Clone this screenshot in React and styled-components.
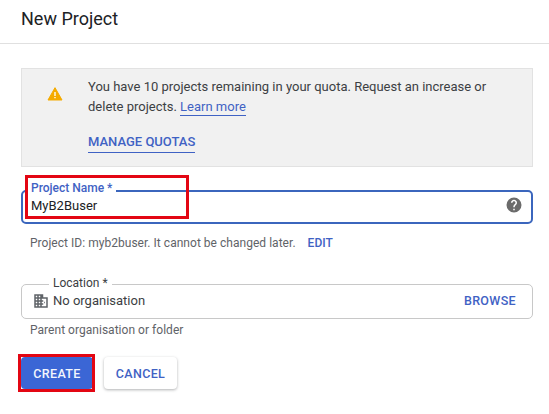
import React from "react";
import styled, { createGlobalStyle } from "styled-components";

const Global = createGlobalStyle`
  html, body { margin: 0; padding: 0; background: #fff; }
  body { width: 549px; height: 414px; overflow: hidden; font-family: Roboto, "Liberation Sans", sans-serif; }
`;

const Page = styled.div`
  width: 549px;
  height: 414px;
  overflow: hidden;
  display: flex;
  flex-direction: column;
`;

const Header = styled.header`
  height: 43px;
  box-sizing: content-box;
  border-bottom: 1px solid #e0e0e0;
  padding-left: 21px;
  display: flex;
  align-items: center;
`;

const Title = styled.h1`
  margin: 0 0 6px;
  font-size: 18px;
  font-weight: 400;
  line-height: 24px;
  color: #202124;
`;

const Body = styled.main`
  width: 512px;
  margin-left: 21px;
  padding-top: 24px;
  display: flex;
  flex-direction: column;
`;

const Notice = styled.section`
  height: 99px;
  box-sizing: border-box;
  background: #f1f1f1;
  border: 1px solid #e2e2e2;
  display: flex;
  padding: 8px 0 0 25px;
  gap: 25px;
`;

const WarnIcon = styled.svg`
  width: 16px;
  height: 16px;
  flex: none;
  margin-top: 9px;
`;

const NoticeText = styled.div`
  font-size: 13px;
  line-height: 20px;
  color: #3c4043;
  width: 410px;
`;

const NoticeLine = styled.div`
  white-space: nowrap;
`;

const Underlined = styled.a`
  color: #3f62c4;
  text-decoration: none;
  border-bottom: 1px solid #3f62c4;
  padding-bottom: 1px;
`;

const Quotas = styled(Underlined)`
  display: inline-block;
  margin-top: 16px;
  font-weight: 500;
  line-height: 18px;
`;

const Field = styled.div`
  position: relative;
  box-sizing: border-box;
  height: ${p => p.$h}px;
  margin-top: ${p => p.$top}px;
  border: ${p => (p.$active ? "2px solid #3b66bd" : "1px solid #c8c8c8")};
  border-radius: 5px;
  display: flex;
  align-items: center;
  padding: ${p => p.$pad};
`;

const Legend = styled.span`
  position: absolute;
  left: ${p => p.$left}px;
  top: ${p => p.$top}px;
  background: #fff;
  padding: 0 4px;
  font-size: 12px;
  line-height: 14px;
  color: ${p => p.$color};
  font-weight: ${p => p.$weight};
`;

const FieldValue = styled.span`
  flex: 1;
  font-size: 13px;
  color: ${p => p.$color};
`;

const Hint = styled.p`
  margin: ${p => p.$margin};
  font-size: 12px;
  line-height: 16px;
  letter-spacing: 0.03px;
  color: #5f6368;
`;

const Edit = styled.a`
  margin-left: 12px;
  color: #3f62c4;
  font-weight: 500;
`;

const Browse = styled.a`
  color: #3f62c4;
  font-size: 12.5px;
  font-weight: 500;
  letter-spacing: 0.35px;
`;

const BuildingIcon = styled.svg`
  width: 18px;
  height: 18px;
  flex: none;
  margin-right: 3px;
`;

const HelpIcon = styled.svg`
  width: 18px;
  height: 18px;
  flex: none;
`;

const Actions = styled.div`
  display: flex;
  gap: 11px;
  margin-top: 19px;
`;

const Primary = styled.button`
  width: 72px;
  height: 32px;
  border: 0;
  border-radius: 4px;
  background: #3b66d5;
  color: #f3f6fd;
  font: 500 12.5px Roboto, sans-serif;
  letter-spacing: 0.35px;
  padding: 0;
`;

const Secondary = styled.button`
  width: 73px;
  height: 32px;
  border: 0;
  border-radius: 4px;
  background: #fff;
  box-shadow: 0 1px 3px rgba(60, 64, 67, 0.4);
  color: #3f62c4;
  font: 500 12.5px Roboto, sans-serif;
  letter-spacing: 0.35px;
  padding: 0;
`;

const RedBox = styled.div`
  position: absolute;
  box-sizing: border-box;
  left: ${p => p.$x}px;
  top: ${p => p.$y}px;
  width: ${p => p.$w}px;
  height: ${p => p.$h}px;
  border: 3px solid #e30613;
  pointer-events: none;
`;

export default function App() {
  return (
    <Page>
      <Global />
      <Header>
        <Title>New Project</Title>
      </Header>
      <Body>
        <Notice>
          <WarnIcon viewBox="0 0 24 24">
            <path fill="#f5ab00" d="M1.5 21 12 2.5 22.5 21z" stroke="#f5ab00" strokeWidth="1.5" strokeLinejoin="round" />
            <path fill="#fff" d="M11 9h2v6h-2zM11 16.5h2v2h-2z" />
          </WarnIcon>
          <NoticeText>
            <NoticeLine>You have 10 projects remaining in your quota. Request an increase or</NoticeLine>
            <NoticeLine>delete projects. <Underlined>Learn more</Underlined></NoticeLine>
            <Quotas>MANAGE QUOTAS</Quotas>
          </NoticeText>
        </Notice>

        <Field $h={34} $top={23} $active $pad="0 8px 4px 8px">
          <Legend $left={4} $top={-11} $color="#3f62c4" $weight={500}>Project Name *</Legend>
          <FieldValue $color="#202124">MyB2Buser</FieldValue>
          <HelpIcon viewBox="0 0 24 24">
            <path fill="#6b6b6b" d="M12 2a10 10 0 1 0 0 20 10 10 0 0 0 0-20zm1 17h-2v-2h2v2zm2.07-7.75-.9.92C13.45 12.9 13 13.5 13 15h-2v-.5c0-1.1.45-2.1 1.17-2.83l1.24-1.26c.37-.36.59-.86.59-1.41 0-1.1-.9-2-2-2s-2 .9-2 2H8c0-2.21 1.79-4 4-4s4 1.79 4 4c0 .88-.36 1.68-.93 2.25z" />
          </HelpIcon>
        </Field>
        <Hint $margin="11px 0 0 9px">
          Project ID: myb2buser. It cannot be changed later.
          <Edit>EDIT</Edit>
        </Hint>

        <Field $h={35} $top={33} $pad="0 16px 2px 10px">
          <Legend $left={27} $top={-9} $color="#3c4043" $weight={400}>Location *</Legend>
          <BuildingIcon viewBox="0 0 24 24">
            <path fill="#5f6368" d="M3 21V3h12v4h6v14H3zm2-2h2v-2H5v2zm0-4h2v-2H5v2zm0-4h2V9H5v2zm0-4h2V5H5v2zm4 12h2v-2H9v2zm0-4h2v-2H9v2zm0-4h2V9H9v2zm0-4h2V5H9v2zm4 12h6V9h-6v2h2v2h-2v2h2v2h-2v2zm3-4v-2h1v2h-1z" />
          </BuildingIcon>
          <FieldValue $color="#3c4043">No organisation</FieldValue>
          <Browse>BROWSE</Browse>
        </Field>
        <Hint $margin="3px 0 0 9px">Parent organisation or folder</Hint>

        <Actions>
          <Primary>CREATE</Primary>
          <Secondary>CANCEL</Secondary>
        </Actions>
      </Body>
      <RedBox $x={25} $y={175} $w={164} $h={44} />
      <RedBox $x={18} $y={354} $w={77} $h={38} />
    </Page>
  );
}
